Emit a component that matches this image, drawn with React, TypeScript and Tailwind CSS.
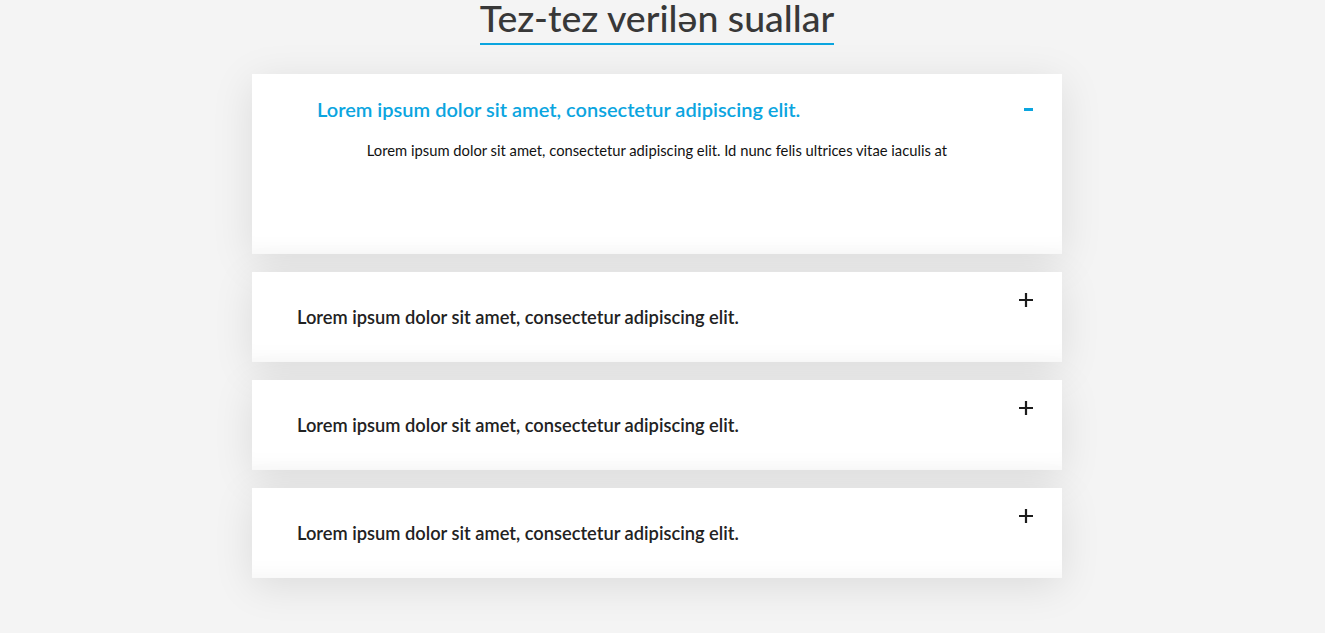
import { useState } from "react"

const items = [
  {
    q: "Lorem ipsum dolor sit amet, consectetur adipiscing elit.",
    a: "Lorem ipsum dolor sit amet, consectetur adipiscing elit. Id nunc felis ultrices vitae iaculis at",
  },
  {
    q: "Lorem ipsum dolor sit amet, consectetur adipiscing elit.",
    a: "Lorem ipsum dolor sit amet, consectetur adipiscing elit. Id nunc felis ultrices vitae iaculis at",
  },
  {
    q: "Lorem ipsum dolor sit amet, consectetur adipiscing elit.",
    a: "Lorem ipsum dolor sit amet, consectetur adipiscing elit. Id nunc felis ultrices vitae iaculis at",
  },
  {
    q: "Lorem ipsum dolor sit amet, consectetur adipiscing elit.",
    a: "Lorem ipsum dolor sit amet, consectetur adipiscing elit. Id nunc felis ultrices vitae iaculis at",
  },
]

const cardShadow =
  "shadow-[inset_0_-24px_24px_-24px_rgba(0,0,0,0.05),0_8px_40px_rgba(0,0,0,0.1)]"

export default function App() {
  const [open, setOpen] = useState(0)

  return (
    <div className="min-h-screen bg-[#f4f4f4] font-['Lato',sans-serif] pb-10">
      <div className="w-[1314px]">
        <div className="flex justify-center">
          <h2 className="text-[37.5px] leading-[36px] text-[#383838] font-medium border-b-2 border-[#0ba5df] pb-[7px]">
            Tez-tez verilən suallar
          </h2>
        </div>

        <div className="w-[810px] mx-auto mt-[29px] flex flex-col gap-[18px]">
          {items.map((item, i) =>
            open === i ? (
              <div key={i} className={`bg-white h-[180px] ${cardShadow}`}>
                <button
                  onClick={() => setOpen(-1)}
                  className="w-full flex justify-between items-center pl-[65px] pr-[29px] pt-[23px] text-left"
                >
                  <span className="text-[20px] leading-[24px] font-semibold text-[#0ba5df]">
                    {item.q}
                  </span>
                  <span className="block w-[9px] h-[3px] bg-[#0ba5df]" />
                </button>
                <p className="text-center text-[14.75px] leading-[20px] text-[#111] mt-[19px]">{item.a}</p>
              </div>
            ) : (
              <button
                key={i}
                onClick={() => setOpen(i)}
                className={`bg-white h-[90px] flex justify-between items-start pl-[45px] pr-[29px] text-left ${cardShadow}`}
              >
                <span className="mt-[33px] text-[18.3px] leading-[24px] font-semibold text-[#222]">
                  {item.q}
                </span>
                <svg width="14" height="14" viewBox="0 0 14 14" className="mt-[21px]">
                  <path d="M7 0v14M0 7h14" stroke="#1c1c1c" strokeWidth="2.2" />
                </svg>
              </button>
            )
          )}
        </div>
      </div>
    </div>
  )
}
